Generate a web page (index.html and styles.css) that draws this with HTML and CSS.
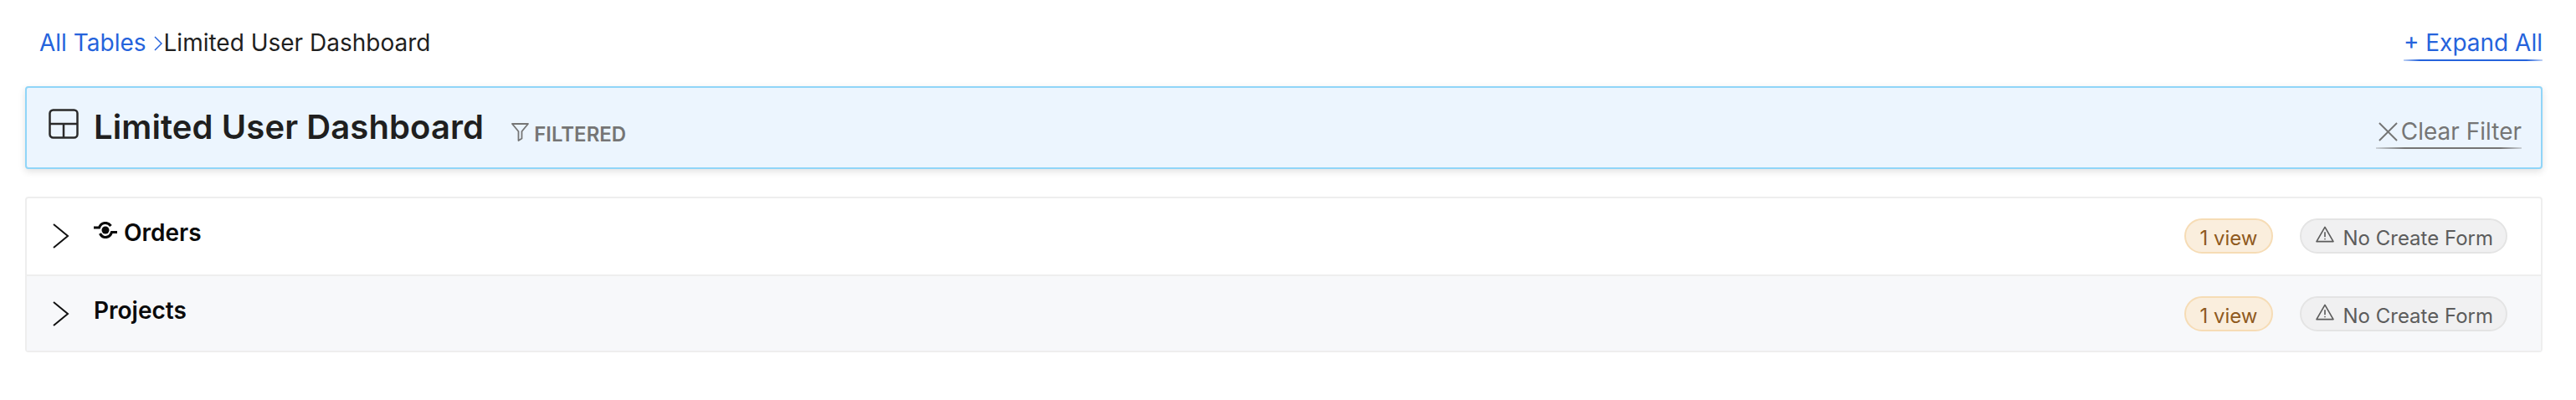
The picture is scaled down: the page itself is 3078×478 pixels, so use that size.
FILE: index.html
```html
<!DOCTYPE html>
<html lang="en">
<head>
    <meta charset="UTF-8">
    <title>Limited User Dashboard</title>
    <link rel="stylesheet" href="styles.css">
</head>
<body>
    <div class="page">
        <div class="topbar">
            <div class="breadcrumb">
                <a class="crumb-link">All Tables</a>
                <svg class="crumb-sep" viewBox="0 0 10 18"><path d="M1 1l8 8-8 8"/></svg>
                <span class="crumb-current">Limited User Dashboard</span>
            </div>
            <a class="expand-all">+ Expand All</a>
        </div>

        <div class="dash-panel">
            <div class="dash-title">
                <svg class="dash-icon" viewBox="0 0 36 36"><rect x="1.5" y="1.5" width="33" height="33" rx="4"/><path d="M1.5 18h33M18 18v16.500"/></svg>
                <h1>Limited User Dashboard</h1>
                <span class="filtered">
                    <svg class="filter-icon" viewBox="0 0 21 22"><path d="M1 1h19l-7.500 9v8.500l-4 2.500v-11z"/></svg>
                    FILTERED
                </span>
            </div>
            <a class="clear-filter">
                <svg class="clear-icon" viewBox="0 0 24 24"><path d="M1 1l22 22M23 1L1 23"/></svg>
                Clear Filter
            </a>
        </div>

        <div class="table-list">
            <div class="table-row">
                <svg class="chevron" viewBox="0 0 20 30"><path d="M1 1l17 14L1 29"/></svg>
                <div class="table-name">
                    <svg class="eye-icon" viewBox="0 0 28 20"><path d="M0 7h6.500C8 3 11 1.500 14 1.500S19 3 20.500 5M7.500 14C9 17 11.500 18.500 14 18.500S20 17 21.500 12.500H28"/><circle cx="14" cy="10" r="4.500"/></svg>
                    Orders
                </div>
                <span class="pill pill-views">1 view</span>
                <span class="pill pill-warn">
                    <svg class="warn-icon" viewBox="0 0 24 22"><path d="M12 1.500L23 20.500H1z"/><path d="M12 8v6.500M12 16.500v1.500"/></svg>
                    No Create Form
                </span>
            </div>
            <div class="table-row row-alt">
                <svg class="chevron" viewBox="0 0 20 30"><path d="M1 1l17 14L1 29"/></svg>
                <div class="table-name">Projects</div>
                <span class="pill pill-views">1 view</span>
                <span class="pill pill-warn">
                    <svg class="warn-icon" viewBox="0 0 24 22"><path d="M12 1.500L23 20.500H1z"/><path d="M12 8v6.500M12 16.500v1.500"/></svg>
                    No Create Form
                </span>
            </div>
        </div>
    </div>
</body>
</html>
```

FILE: styles.css
```css
body {
    margin: 0;
    background: #fff;
    font-family: Inter, "Liberation Sans", sans-serif;
    color: #1f1f1f;
}

.page {
    padding: 34px 40px 0 30px;
}

.topbar {
    display: flex;
    justify-content: space-between;
    align-items: flex-start;
    height: 69px;
    padding-left: 17px;
}

.breadcrumb {
    display: flex;
    align-items: center;
    font-size: 28px;
    line-height: 34px;
}

.crumb-link {
    color: #2563dc;
}

.crumb-sep {
    width: 10px;
    height: 18px;
    margin: 2px 2px 0 9px;
    fill: none;
    stroke: #2563dc;
    stroke-width: 1.500;
}

.expand-all {
    display: block;
    height: 37px;
    font-size: 28px;
    line-height: 34px;
    color: #2563dc;
    border-bottom: 2px solid;
    border-image: linear-gradient(90deg, #2563dc40, #2563dc 12%, #2563dc 88%, #2563dc40) 1;
}

.dash-panel {
    display: flex;
    justify-content: space-between;
    box-sizing: border-box;
    height: 99px;
    padding: 25px 23px 0 26px;
    background: #ecf5fe;
    border: 2px solid #90d5f8;
    border-radius: 4px;
    box-shadow: 0 3px 8px rgba(0, 0, 0, 0.12);
}

.dash-title {
    display: flex;
    align-items: flex-start;
}

.dash-title h1 {
    margin: -2px 0 0 18px;
    font-size: 40px;
    line-height: 48px;
    font-weight: 600;
    letter-spacing: 0.1px;
}

.dash-icon {
    width: 36px;
    height: 36px;
    fill: none;
    stroke: #2a2a2a;
    stroke-width: 2.500;
}

.filtered {
    display: flex;
    align-items: center;
    gap: 6px;
    height: 32px;
    margin: 14px 0 0 33px;
    font-size: 24px;
    font-weight: 600;
    color: #757575;
}

.filter-icon {
    width: 21px;
    height: 22px;
    margin-top: -4px;
    fill: none;
    stroke: #757575;
    stroke-width: 1.800;
    stroke-linejoin: round;
}

.clear-filter {
    display: flex;
    align-items: center;
    gap: 4px;
    box-sizing: border-box;
    height: 38px;
    margin-top: 10px;
    padding: 0 0 2px 3px;
    font-size: 28px;
    color: #757575;
    border-bottom: 2px solid;
    border-image: linear-gradient(90deg, #75757540, #757575 20%, #757575 85%, #75757540) 1;
}

.clear-icon {
    width: 23px;
    height: 23px;
    fill: none;
    stroke: #757575;
    stroke-width: 2;
}

.table-list {
    margin-top: 33px;
    border: 2px solid #eeeeee;
    border-radius: 4px;
}

.table-row {
    display: flex;
    align-items: center;
    box-sizing: border-box;
    height: 91px;
    padding: 0 40px 0 31px;
    border-bottom: 2px solid transparent;
}

.row-alt {
    background: #f7f8fa;
    border-top: 2px solid #eeeeee;
    border-bottom: 0;
}

.chevron {
    flex: none;
    width: 20px;
    height: 30px;
    fill: none;
    stroke: #111;
    stroke-width: 2;
}

.table-name {
    display: flex;
    align-items: center;
    gap: 8px;
    flex: 1;
    margin: -7px 0 0 29px;
    font-size: 28px;
    font-weight: 600;
    color: #0a0a0a;
}

.eye-icon {
    width: 28px;
    height: 20px;
    margin-top: -6px;
    fill: none;
    stroke: #0a0a0a;
    stroke-width: 3.200;
}

.eye-icon circle {
    fill: #0a0a0a;
    stroke: none;
}

.pill {
    display: flex;
    align-items: center;
    box-sizing: border-box;
    height: 42px;
    margin-top: 1px;
    padding-top: 5px;
    border: 2px solid;
    border-radius: 21px;
    font-size: 24px;
}

.pill-views {
    padding-left: 16px;
    padding-right: 16px;
    background: #faeedd;
    border-color: #f6dcb5;
    color: #8f5a1e;
}

.pill-warn {
    gap: 11px;
    margin-left: 32px;
    padding-left: 17px;
    padding-right: 15px;
    background: #f0f0f1;
    border-color: #e4e4e4;
    color: #5c5c5c;
}

.warn-icon {
    width: 22px;
    height: 20px;
    margin-top: -10px;
    fill: none;
    stroke: #5c5c5c;
    stroke-width: 1.800;
    stroke-linejoin: round;
}
```
